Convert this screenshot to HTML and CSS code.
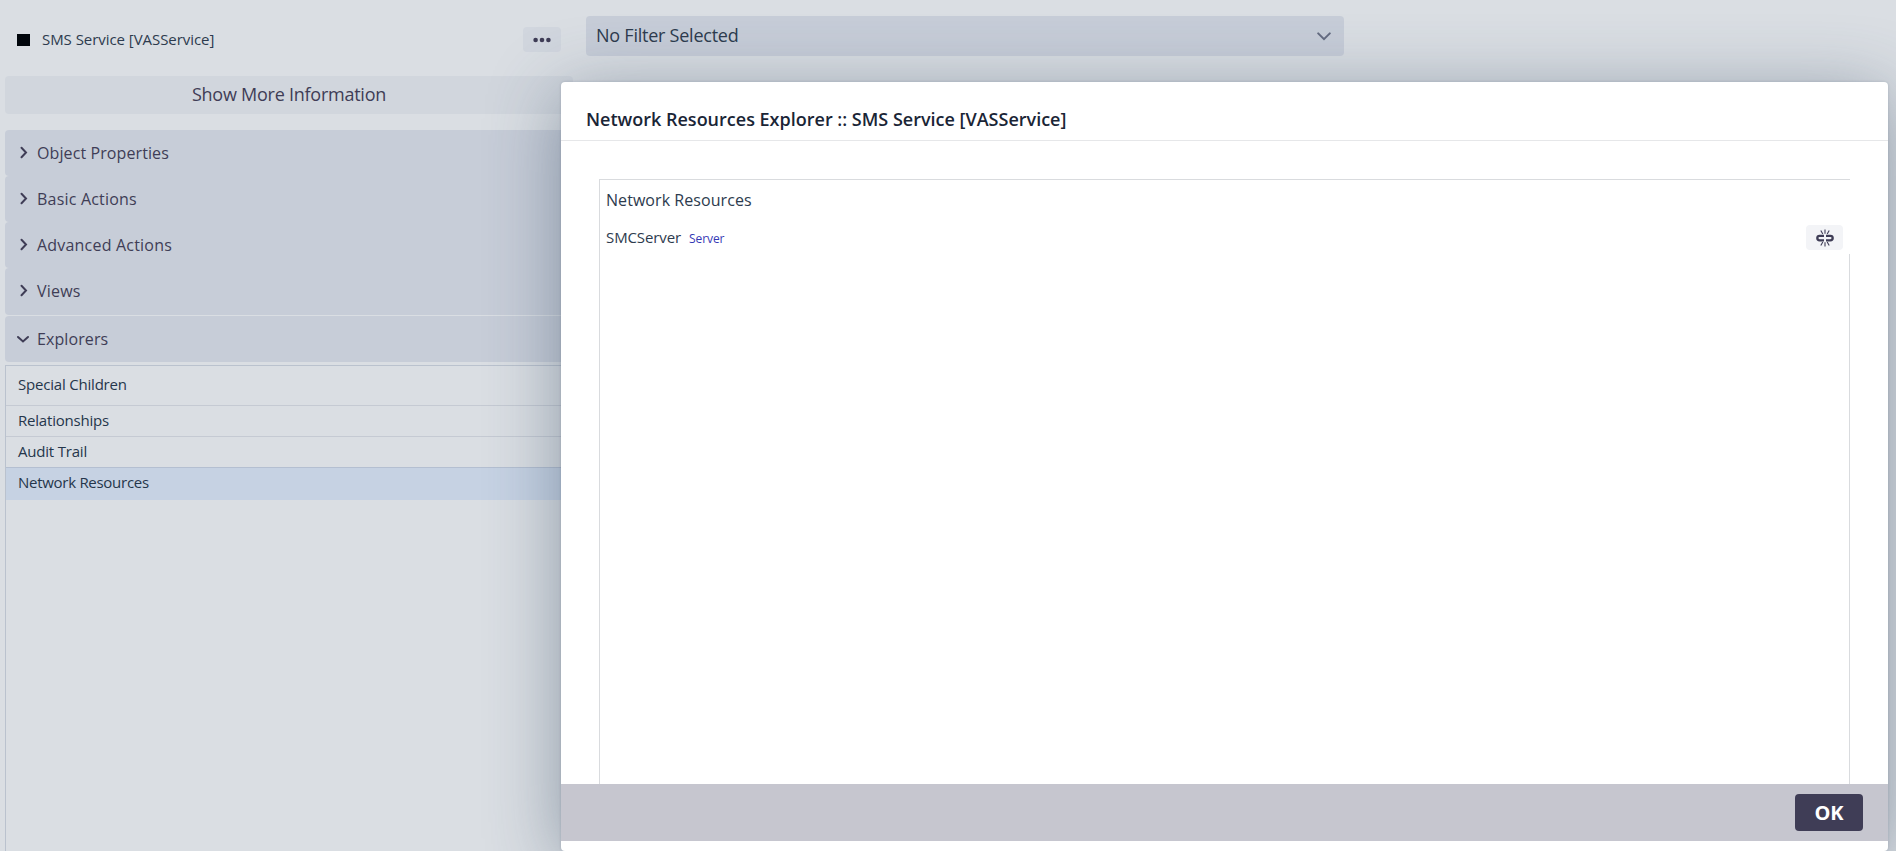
FILE: index.html
```
<!DOCTYPE html>
<html lang="en">
<head>
<meta charset="utf-8">
<title>Network Resources Explorer</title>
<link rel="stylesheet" href="styles.css">
</head>
<body>
<div class="page">
  <aside class="sidebar">
    <header class="object">
      <span class="swatch"></span>
      <span class="object-name">SMS Service [VASService]</span>
      <button class="more" aria-label="More"><svg width="18" height="6" viewBox="0 0 18 6"><circle cx="2.6" cy="3" r="2.3"/><circle cx="9" cy="3" r="2.3"/><circle cx="15.4" cy="3" r="2.3"/></svg></button>
    </header>
    <button class="show-more">Show More Information</button>
    <div class="accordion">
      <div class="section"><svg class="chev" viewBox="0 0 14 14"><path d="M5.5 1.8 10 6.5 5.5 11.2"/></svg><span class="w1">Object Properties</span></div>
      <div class="section"><svg class="chev" viewBox="0 0 14 14"><path d="M5.5 1.8 10 6.5 5.5 11.2"/></svg><span class="w2">Basic Actions</span></div>
      <div class="section"><svg class="chev" viewBox="0 0 14 14"><path d="M5.5 1.8 10 6.5 5.5 11.2"/></svg><span class="w2">Advanced Actions</span></div>
      <div class="section last"><svg class="chev" viewBox="0 0 14 14"><path d="M5.5 1.8 10 6.5 5.5 11.2"/></svg><span class="w2">Views</span></div>
      <div class="section"><svg class="chev" viewBox="0 0 14 14"><path d="M2 5 7 9.5 12 5"/></svg><span class="w1">Explorers</span></div>
    </div>
    <div class="explorers">
      <div class="item first">Special Children</div>
      <div class="item">Relationships</div>
      <div class="item">Audit Trail</div>
      <div class="item selected">Network Resources</div>
    </div>
  </aside>
  <main class="content">
    <div class="filter"><span>No Filter Selected</span><svg width="14" height="9" viewBox="0 0 14 9"><path d="M1.2 1.4 7 7.2 12.8 1.4"/></svg></div>
  </main>
</div>
<section class="modal">
  <h1 class="modal-title">Network Resources Explorer :: SMS Service [VASService]</h1>
  <div class="modal-body">
    <div class="panel">
      <div class="panel-title">Network Resources</div>
      <div class="resource">
        <span class="res-name">SMCServer</span><span class="res-type">Server</span>
        <button class="unlink" aria-label="Release"><svg width="18" height="18" viewBox="0 0 18 18"><path class="link" d="M8 6.8H3.6a2.2 2.2 0 0 0 0 4.6H8M10 6.8h4.4a2.2 2.2 0 0 1 0 4.6H10"/><path class="rays" d="M9 .5v4.2M9 13.3v4.2M4.8 1.5 6.8 5M13.2 1.5 11.2 5M4.8 16.5 6.8 13M13.2 16.5 11.2 13"/></svg></button>
      </div>
      <div class="panel-space"></div>
    </div>
  </div>
  <footer class="modal-footer"><button class="ok">OK</button></footer>
</section>
</body>
</html>
```
FILE: styles.css
```
* { box-sizing: border-box; }
body {
  margin: 0;
  height: 851px;
  overflow: hidden;
  background: #dadee3;
  color: #2d3b4e;
  font-family: "Open Sans", "Noto Sans", sans-serif;
}
button { border: 0; padding: 0; font: inherit; color: inherit; }
.page { display: flex; height: 851px; }
.sidebar { display: flex; flex-direction: column; width: 573px; padding-left: 5px; }
.object { display: flex; align-items: center; height: 76px; padding: 3px 12px 0; }
.swatch { width: 13px; height: 12px; background: #01060c; }
.object-name { flex: 1; padding: 0 0 2px 12px; font-size: 15px; letter-spacing: -.05px; }
.more { display: flex; align-items: center; justify-content: center; width: 38px; height: 25px; border-radius: 4px; background: #d1d6de; }
.more svg { fill: #3f3d56; }
.show-more { height: 38px; padding-bottom: 2px; border-radius: 4px; background: #d1d6dd; color: #3f3d56; font-size: 18px; letter-spacing: -.25px; }
.accordion { margin-top: 16px; }
.section {
  display: flex;
  align-items: center;
  gap: 7px;
  height: 46px;
  padding-left: 11px;
  border-radius: 4px;
  background: #c7cdd8;
  color: #3f3d56;
  font-size: 16px;
}
.section.last { height: 47px; margin-bottom: 1px; padding-bottom: 1px; }
.chev { width: 14px; height: 14px; fill: none; stroke: #3f3d56; stroke-width: 2; stroke-linecap: round; }
.w1 { letter-spacing: .1px; }
.w2 { letter-spacing: .2px; }
.explorers { flex: 1; margin-top: 3px; border: 1px solid #bac2ce; border-bottom: 0; }
.item { display: flex; align-items: center; height: 31px; padding: 0 0 2px 12px; border-bottom: 1px solid #c5cad3; color: #25364b; font-size: 15px; letter-spacing: -.2px; }
.item.first { height: 40px; padding-bottom: 4px; }
.item:nth-child(3) { border-color: #b4bfd1; }
.item.selected { height: 32px; padding-bottom: 4px; border-bottom: 0; background: #c6d2e3; letter-spacing: -.28px; }
.content { flex: 1; padding: 16px 0 0 13px; }
.filter { display: flex; align-items: center; justify-content: space-between; width: 758px; height: 40px; padding: 0 13px 0 10px; border-radius: 4px; background: #c7cdd8; font-size: 18px; letter-spacing: -.24px; }
.filter span { padding-bottom: 2px; }
.filter svg { fill: none; stroke: #646b80; stroke-width: 2; stroke-linecap: round; }
/* Dialog over the page */
.modal {
  position: absolute;
  left: 561px;
  top: 82px;
  display: flex;
  flex-direction: column;
  width: 1327px;
  height: 769px;
  border-radius: 4px;
  background: #fff;
  box-shadow: 0 12px 72px rgba(50, 72, 96, .46), 0 0 3px rgba(50, 72, 96, .2);
}
.modal-title { display: flex; align-items: center; height: 59px; margin: 0; padding: 15px 25px 0; border-bottom: 1px solid #e6e7e9; color: #1a2536; font-size: 18px; font-weight: 600; white-space: nowrap; }
.modal-body { flex: 1; display: flex; padding: 38px 38px 0; }
.panel { flex: 1; display: flex; flex-direction: column; border: solid #d9dbde; border-width: 1px 0 0 1px; }
.panel-title { height: 40px; padding: 9px 6px 0; font-size: 16px; line-height: 22px; letter-spacing: .06px; }
.resource { display: flex; align-items: center; height: 34px; padding: 2px 7px 0 6px; }
.res-name { padding-bottom: 2px; font-size: 15px; letter-spacing: -.1px; }
.res-type { flex: 1; padding: 0 0 0 8px; color: #3538b5; font-size: 12px; letter-spacing: -.1px; }
.unlink { display: flex; align-items: center; justify-content: center; width: 37px; height: 25px; margin-bottom: 1px; border-radius: 4px; background: #f3f4f7; }
.unlink path { fill: none; stroke: #3f3d56; }
.link { stroke-width: 2.3; }
.rays { stroke-width: 1.1; }
.panel-space { flex: 1; border-right: 1px solid #d9dbde; }
.modal-footer { display: flex; align-items: center; justify-content: flex-end; height: 57px; margin-bottom: 10px; padding-right: 25px; background: #c6c6cf; }
.ok { width: 68px; height: 37px; border-radius: 4px; background: #3f3d56; color: #fff; font-size: 20px; font-weight: 700; }
```
